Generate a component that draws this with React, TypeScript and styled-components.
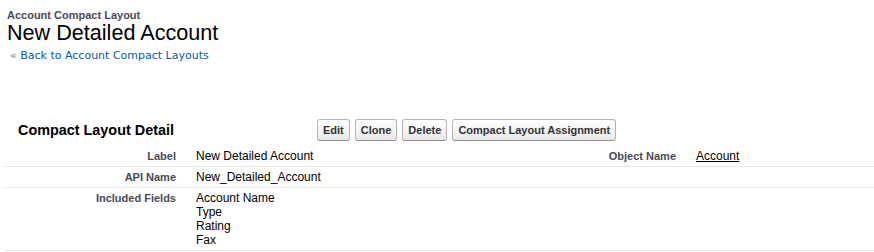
import React from 'react';
import styled, { createGlobalStyle } from 'styled-components';

const GlobalStyle = createGlobalStyle`
  body {
    margin: 0;
    background: #fff;
    font-family: "Liberation Sans", Arial, sans-serif;
    color: #000;
  }
`;

const Page = styled.div`
  width: 874px;
  padding-left: 5px;
  box-sizing: border-box;
`;

const PageHeader = styled.div`
  padding: 10px 0 0 2px;
`;

const PageType = styled.div`
  font-size: 11px;
  line-height: 11px;
  font-weight: bold;
  color: #4a4a56;
`;

const PageTitle = styled.h1`
  margin: 1px 0 0;
  font-size: 21.6px;
  line-height: 22px;
  font-weight: normal;
  color: #000;
`;

const Breadcrumb = styled.div`
  margin: 5px 0 0 3px;
  font-family: "DejaVu Sans", Verdana, sans-serif;
  font-size: 11px;
  line-height: 13px;
  color: #015ba7;

  span {
    color: #7d7d84;
  }
`;

const Section = styled.div`
  margin-top: 53px;
`;

const SectionHeader = styled.div`
  display: grid;
  grid-template-columns: 312px auto;
  align-items: center;
  padding: 4px 0 5px;
`;

const SectionTitle = styled.h2`
  margin: 0;
  padding-left: 13px;
  font-size: 14.4px;
  font-weight: bold;
  color: #000;
`;

const Buttons = styled.div`
  display: flex;
  gap: 5px;
`;

const Button = styled.button`
  height: 22px;
  padding: 0 5px;
  font-family: "Liberation Sans", Arial, sans-serif;
  font-size: 11px;
  font-weight: bold;
  color: #333;
  background: linear-gradient(#ffffff, #f4f4f4 50%, #e8e8e8);
  border: 1px solid #b5b5b5;
  border-bottom-color: #8f8f8f;
  border-radius: 3px;
  cursor: pointer;
`;

const Row = styled.div`
  display: grid;
  grid-template-columns: 181px 319px 181px 1fr;
  border-bottom: 1px solid #e6e6e6;
`;

const Label = styled.div`
  padding: 3px 10px 3px 0;
  text-align: right;
  font-size: 11px;
  line-height: 14px;
  font-weight: bold;
  color: #4a4a56;
`;

const Value = styled.div`
  padding: 3px 0 3px 10px;
  font-size: 12px;
  line-height: 14px;
  color: #000;

  a {
    color: #000;
    text-decoration: underline;
  }
`;

const fields = ['Account Name', 'Type', 'Rating', 'Fax'];

const App: React.FC = () => {
  return (
    <Page>
      <GlobalStyle />
      <PageHeader>
        <PageType>Account Compact Layout</PageType>
        <PageTitle>New Detailed Account</PageTitle>
        <Breadcrumb>
          <span>«</span> Back to Account Compact Layouts
        </Breadcrumb>
      </PageHeader>
      <Section>
        <SectionHeader>
          <SectionTitle>Compact Layout Detail</SectionTitle>
          <Buttons>
            <Button>Edit</Button>
            <Button>Clone</Button>
            <Button>Delete</Button>
            <Button>Compact Layout Assignment</Button>
          </Buttons>
        </SectionHeader>
        <Row>
          <Label>Label</Label>
          <Value>New Detailed Account</Value>
          <Label>Object Name</Label>
          <Value>
            <a href="#">Account</a>
          </Value>
        </Row>
        <Row>
          <Label>API Name</Label>
          <Value>New_Detailed_Account</Value>
          <Label />
          <Value />
        </Row>
        <Row>
          <Label>Included Fields</Label>
          <Value>
            {fields.map((f) => (
              <div key={f}>{f}</div>
            ))}
          </Value>
          <Label />
          <Value />
        </Row>
      </Section>
    </Page>
  );
};

export default App;
